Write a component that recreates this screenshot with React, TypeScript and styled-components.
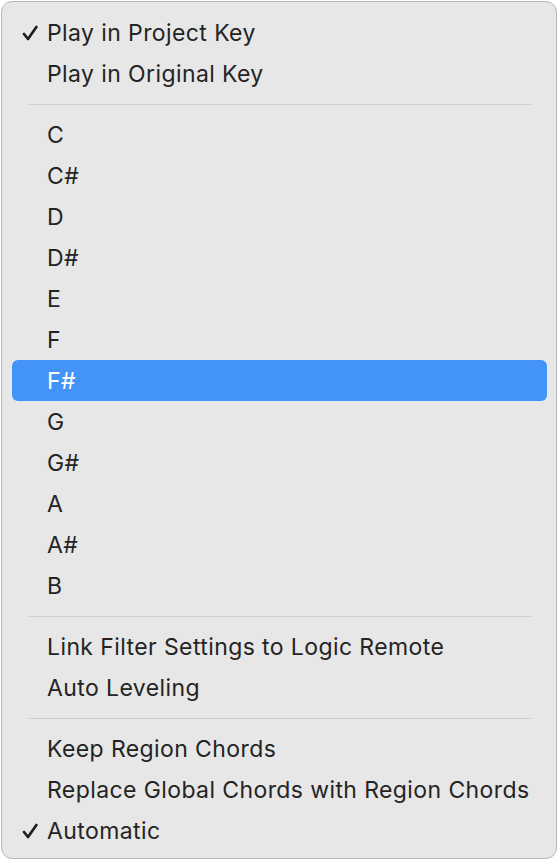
import styled, { createGlobalStyle } from "styled-components";

const GlobalStyle = createGlobalStyle`
  html, body {
    margin: 0;
    padding: 0;
    background: #ffffff;
  }
  body {
    font-family: Inter, "Liberation Sans", sans-serif;
    -webkit-font-smoothing: antialiased;
  }
`;

const Menu = styled.div`
  box-sizing: border-box;
  margin: 1px 0 0 1px;
  width: 556px;
  padding: 10px 9px 7px 10px;
  background: #e7e7e7;
  border: 1px solid #b9b9b9;
  border-radius: 11px;
  display: flex;
  flex-direction: column;
`;

const Row = styled.div<{ $active?: boolean }>`
  position: relative;
  height: 41px;
  display: flex;
  align-items: center;
  padding-left: 35px;
  border-radius: 6px;
  font-size: 23px;
  letter-spacing: 0.4px;
  color: ${(p) => (p.$active ? "#ffffff" : "#242424")};
  background: ${(p) => (p.$active ? "#4493f8" : "transparent")};
`;

const Check = styled.svg`
  position: absolute;
  left: 10px;
  top: 13px;
  width: 16px;
  height: 16px;
`;

const Separator = styled.div`
  height: 20px;
  display: flex;
  align-items: center;
  padding: 0 16px 0 17px;

  &::after {
    content: "";
    flex: 1;
    height: 1px;
    background: #cdcdcd;
  }
`;

type Item = { label: string; checked?: boolean; active?: boolean } | "sep";

const items: Item[] = [
  { label: "Play in Project Key", checked: true },
  { label: "Play in Original Key" },
  "sep",
  { label: "C" },
  { label: "C#" },
  { label: "D" },
  { label: "D#" },
  { label: "E" },
  { label: "F" },
  { label: "F#", active: true },
  { label: "G" },
  { label: "G#" },
  { label: "A" },
  { label: "A#" },
  { label: "B" },
  "sep",
  { label: "Link Filter Settings to Logic Remote" },
  { label: "Auto Leveling" },
  "sep",
  { label: "Keep Region Chords" },
  { label: "Replace Global Chords with Region Chords" },
  { label: "Automatic", checked: true },
];

function CheckMark() {
  return (
    <Check viewBox="0 0 16 16">
      <path
        d="M2 9 L6 14 L14.4 2"
        fill="none"
        stroke="#1e1e1e"
        strokeWidth="2.7"
        strokeLinecap="round"
        strokeLinejoin="round"
      />
    </Check>
  );
}

export default function App() {
  return (
    <>
      <GlobalStyle />
      <Menu>
        {items.map((item, i) =>
          item === "sep" ? (
            <Separator key={i} />
          ) : (
            <Row key={i} $active={item.active}>
              {item.checked && <CheckMark />}
              {item.label}
            </Row>
          )
        )}
      </Menu>
    </>
  );
}
